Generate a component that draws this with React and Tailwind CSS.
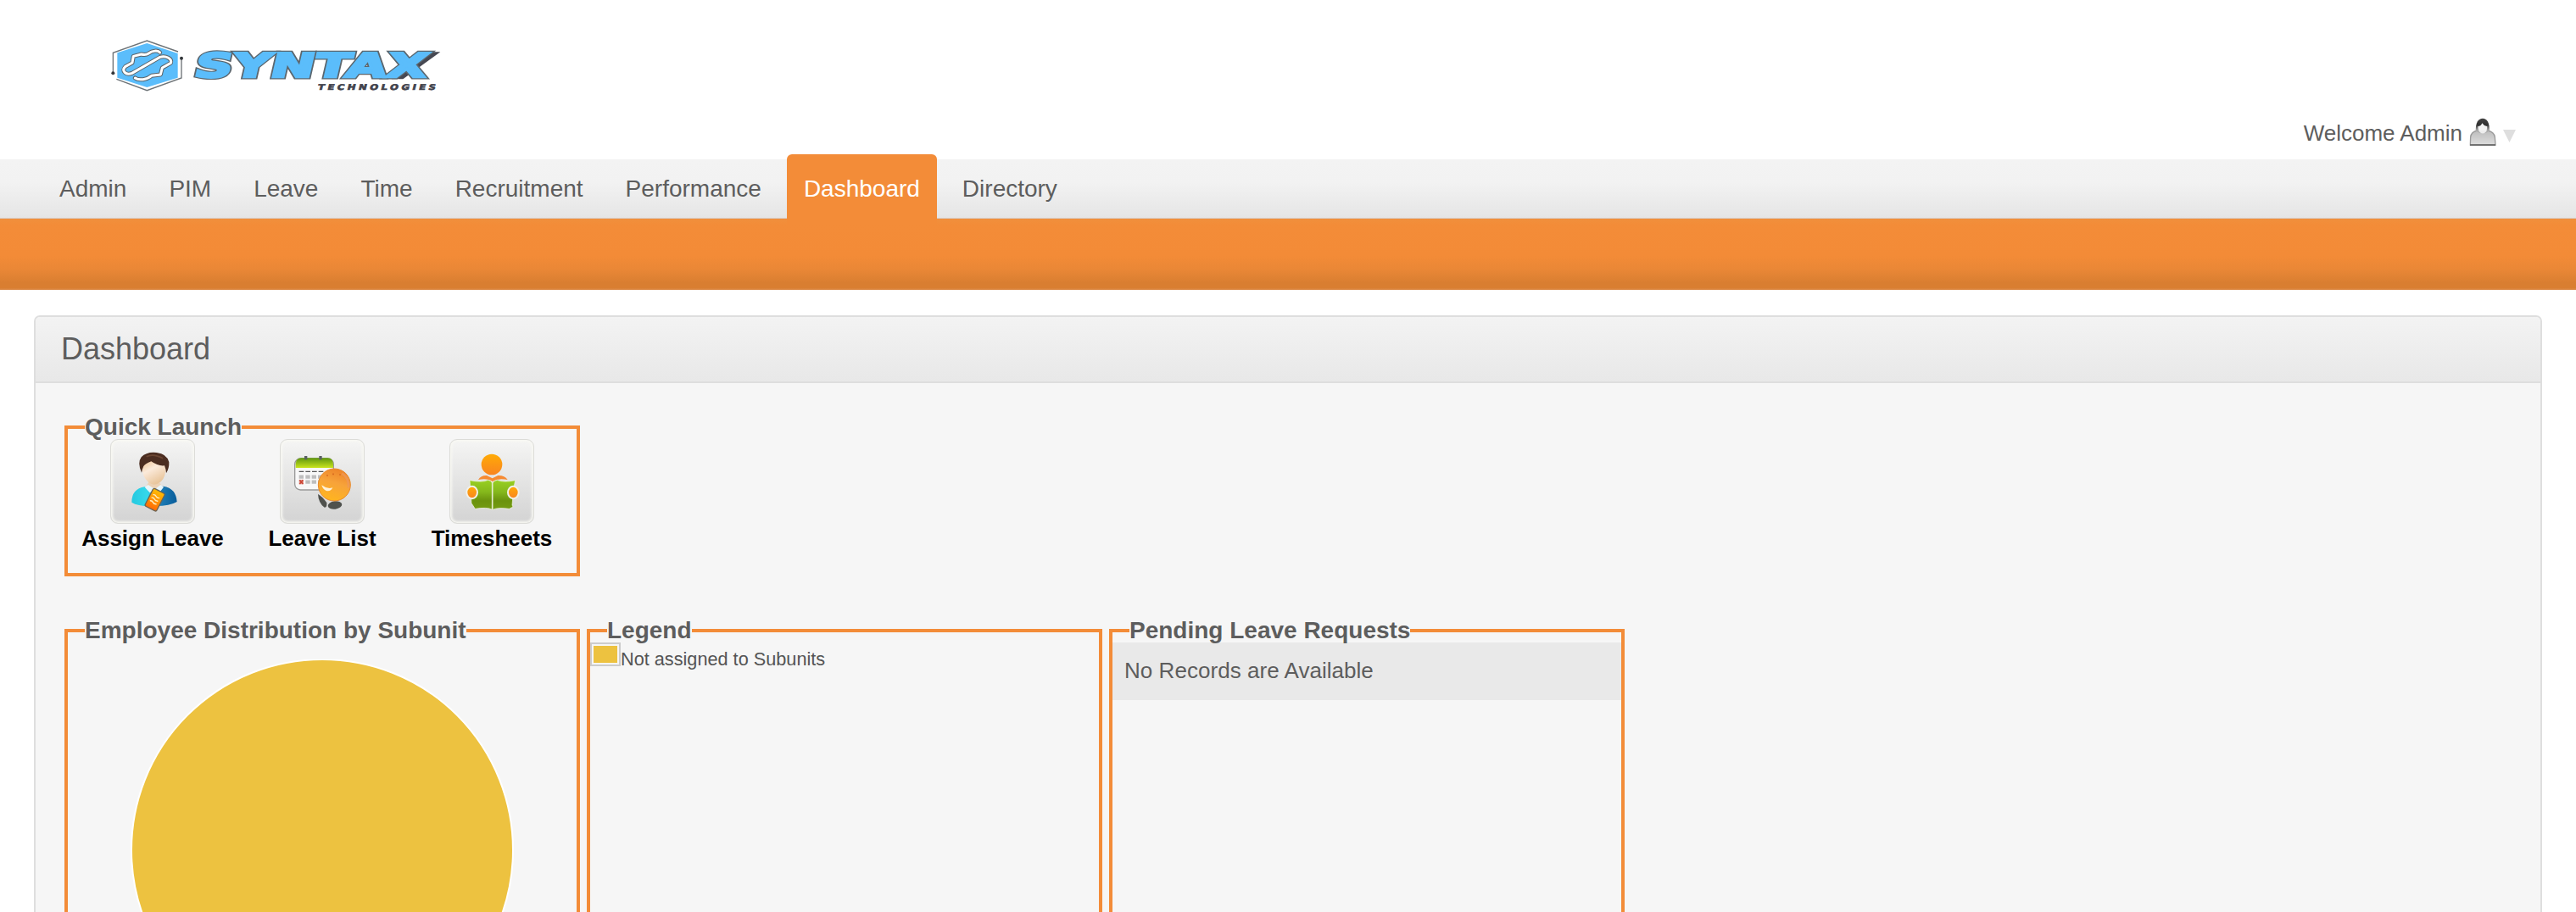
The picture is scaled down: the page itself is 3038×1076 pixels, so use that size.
import React from "react";

const menu = ["Admin", "PIM", "Leave", "Time", "Recruitment", "Performance", "Dashboard", "Directory"];

function Wordmark({ stroke, width }) {
  return (
    <text
      transform="translate(352 184) skewX(-13)"
      textLength="822"
      lengthAdjust="spacingAndGlyphs"
      fontFamily="DejaVu Sans, sans-serif"
      fontWeight="700"
      fontSize="118"
      fill="#5bbdfb"
      stroke={stroke}
      strokeWidth={width}
      strokeLinejoin="miter"
    >
      SYNTAX
    </text>
  );
}

function Logo() {
  return (
    <svg className="ml-[110px] mt-[30px] block h-[90px] w-[430px]" viewBox="0 0 1290 270">
      <path d="M85 97 L190 63 L299 99 L299 185 L190 219 L85 185 Z" fill="#5bbdfb" />
      <g fill="none" stroke="#6d7377" strokeWidth="4">
        <path d="M70 168 V97 L190 54 L300 93" />
        <path d="M312 116 V186 L190 230 L82 190" />
      </g>
      <circle cx="70" cy="169" r="6" fill="#33363a" />
      <circle cx="312" cy="116" r="6" fill="#33363a" />
      <g fill="none" strokeLinecap="round" strokeLinejoin="round">
        <g stroke="#596269" strokeWidth="15">
          <path d="M236 96 C228 86 208 90 196 99 Q186 106 170 102 L142 109 L138 132 L113 146 C99 160 114 178 137 169 L236 112 C258 106 280 118 274 133 L244 150 L238 174 L206 178 C190 192 162 196 148 186" />
        </g>
        <g stroke="#fff" strokeWidth="9">
          <path d="M236 96 C228 86 208 90 196 99 Q186 106 170 102 L142 109 L138 132 L113 146 C99 160 114 178 137 169 L236 112 C258 106 280 118 274 133 L244 150 L238 174 L206 178 C190 192 162 196 148 186" />
        </g>
      </g>
      <path d="M1055 190 L1188 94 L1228 94 L1096 190 Z" fill="#464852" />
      <g aria-hidden="true"><Wordmark stroke="#5b666e" width="15" /></g>
      <Wordmark stroke="#5bbdfb" width="8" />
      <text
        transform="translate(793 227) skewX(-14)"
        textLength="427"
        lengthAdjust="spacingAndGlyphs"
        fontFamily="DejaVu Sans, sans-serif"
        fontWeight="700"
        fontSize="27"
        letterSpacing="8"
        fill="#42434d"
        stroke="#42434d"
        strokeWidth="2"
      >
        TECHNOLOGIES
      </text>
    </svg>
  );
}

function UserIcon() {
  return (
    <svg className="ml-[8px] block h-[33px] w-[32px]" viewBox="0 0 96 99">
      <defs>
        <linearGradient id="body" x1="0" y1="0" x2="0" y2="1">
          <stop offset="0" stopColor="#bcbcbc" />
          <stop offset="1" stopColor="#dedede" />
        </linearGradient>
        <linearGradient id="hair" x1="0" y1="0" x2="0" y2="1">
          <stop offset="0" stopColor="#454545" />
          <stop offset="0.45" stopColor="#303030" />
          <stop offset="0.8" stopColor="#aaa" />
        </linearGradient>
      </defs>
      <path d="M4 96 L5 68 Q7 50 28 45 L66 45 Q88 50 91 68 L93 96 Z" fill="url(#body)" stroke="#9a9a9a" strokeWidth="4" />
      <path d="M3 96 H93" stroke="#666" strokeWidth="5" />
      <path d="M23 44 Q24 2 48 2 Q71 2 72 44 Q64 54 48 54 Q32 54 23 44 Z" fill="url(#hair)" />
      <path d="M31 31 Q42 29 46 19 Q52 29 64 31 Q65 52 48 54 Q31 52 31 31 Z" fill="#f3f3f3" />
      <path d="M33 45 Q48 66 63 45" fill="#ededed" />
    </svg>
  );
}

function AssignIcon() {
  return (
    <>
      <defs>
        <linearGradient id="shirt" x1="0" x2="1">
          <stop offset="0" stopColor="#25c9e0" />
          <stop offset="0.35" stopColor="#35d8ea" />
          <stop offset="0.6" stopColor="#2180b8" />
          <stop offset="1" stopColor="#085c9a" />
        </linearGradient>
        <linearGradient id="face" x1="0" y1="0" x2="0.5" y2="1">
          <stop offset="0" stopColor="#e8b377" />
          <stop offset="0.5" stopColor="#fbeada" />
          <stop offset="1" stopColor="#e9c69d" />
        </linearGradient>
        <linearGradient id="note" x1="0" y1="0" x2="0" y2="1">
          <stop offset="0" stopColor="#ffbd05" />
          <stop offset="1" stopColor="#ff6a05" />
        </linearGradient>
      </defs>
      <path d="M106 248 Q106 200 152 193 L218 191 Q263 198 266 246 Q240 262 184 261 Q128 263 106 248 Z" fill="url(#shirt)" />
      <path d="M158 190 L168 174 H202 L212 190 L190 210 Z" fill="#edd2b6" />
      <path d="M152 194 L164 186 L188 202 L208 186 L219 194 L205 212 L187 203 L170 214 Z" fill="#e8f5fa" />
      <path d="M141 118 Q145 90 184 88 Q224 90 228 120 Q226 160 210 174 Q188 194 166 178 Q142 158 141 118 Z" fill="url(#face)" />
      <path d="M141 143 Q125 108 140 88 Q159 68 194 72 Q231 76 238 106 Q239 128 228 145 Q227 130 222 118 Q200 121 175 103 Q152 113 148 120 Q143 130 141 143 Z" fill="#4b2d20" />
      <path d="M158 86 Q182 74 216 92" fill="none" stroke="#6b4632" strokeWidth="5" />
      <g transform="rotate(27 188 239)">
        <rect x="165" y="204" width="46" height="70" rx="6" fill="url(#note)" stroke="#6b6456" strokeWidth="4" />
        <path d="M174 226 q6 -5 12 0 t14 0 M174 238 q6 -5 12 0 t14 0 M174 250 q6 -5 12 0 t14 0" fill="none" stroke="#fff0c5" strokeWidth="4" />
      </g>
    </>
  );
}

function LeaveIcon() {
  return (
    <>
      <defs>
        <linearGradient id="calTop" x1="0" y1="0" x2="0" y2="1">
          <stop offset="0" stopColor="#5f960e" />
          <stop offset="1" stopColor="#cae51d" />
        </linearGradient>
        <linearGradient id="ball" x1="0.7" y1="0" x2="0.4" y2="1">
          <stop offset="0" stopColor="#ed8228" />
          <stop offset="0.45" stopColor="#f7a33a" />
          <stop offset="1" stopColor="#ffb51e" />
        </linearGradient>
      </defs>
      <rect x="83" y="93" width="137" height="111" rx="20" fill="#f8f8f8" stroke="#999" strokeWidth="4" />
      <path d="M86 126 V112 Q87 92 106 91 H199 Q219 92 219 112 V126 Z" fill="url(#calTop)" />
      <path d="M122 84 V97 M174 84 V97" stroke="#5a6062" strokeWidth="10" />
      <path d="M98 139 H188" stroke="#555" strokeWidth="4" strokeDasharray="17 6" />
      <path d="M121 158 H186 M98 158 H116 M121 176 H186" stroke="#bebebe" strokeWidth="13" strokeDasharray="16 6" />
      <rect x="98" y="168" width="16" height="16" fill="#e4a49b" />
      <path d="M100 169 L112 183 M112 169 L100 183" stroke="#cc4737" strokeWidth="5" />
      <path d="M165 219 Q178 225 196 249 Q198 267 188 266 Q167 252 165 219 Z" fill="#4f514d" />
      <ellipse cx="225" cy="258" rx="25" ry="14" transform="rotate(-7 225 258)" fill="#4f514d" />
      <ellipse cx="223" cy="186" rx="57" ry="57" fill="url(#ball)" stroke="#e98a2c" strokeWidth="3" />
      <path d="M250 145 Q276 162 273 196" fill="none" stroke="#ed985e" strokeWidth="8" opacity="0.7" />
      <path d="M178 187 Q197 202 217 196 Q210 211 194 207 Q181 201 178 187 Z" fill="#fff1d8" />
      <path d="M195 153 h6 M216 148 h6 M240 150 h6" stroke="#da6e22" strokeWidth="5" />
    </>
  );
}

function TimesheetIcon() {
  return (
    <>
      <defs>
        <linearGradient id="orange" x1="0" y1="0" x2="0" y2="1">
          <stop offset="0" stopColor="#ffab06" />
          <stop offset="1" stopColor="#f98420" />
        </linearGradient>
        <linearGradient id="book" x1="0" y1="0" x2="0" y2="1">
          <stop offset="0" stopColor="#98d022" />
          <stop offset="0.4" stopColor="#85b81c" />
          <stop offset="0.7" stopColor="#6b920d" />
          <stop offset="1" stopColor="#749c12" />
        </linearGradient>
      </defs>
      <circle cx="180" cy="114" r="37" fill="url(#orange)" />
      <path d="M132 168 Q142 152 162 153 L182 163 L202 153 Q225 152 236 168 Q203 161 182 174 Q164 161 132 168 Z" fill="#f68a32" />
      <path d="M102 170 Q146 179 167 169 Q178 171 182 180 Q188 171 199 169 Q222 179 263 170 L257 200 L252 258 L255 264 L242 271 Q201 265 183 274 Q163 264 121 271 L108 251 Z" fill="url(#book)" stroke="#f3f6e9" strokeWidth="2" />
      <path d="M182 175 V274" stroke="#e6edcf" strokeWidth="5" />
      <ellipse cx="110" cy="213" rx="19" ry="22" fill="url(#orange)" stroke="#f2f1e9" strokeWidth="6" />
      <ellipse cx="256" cy="213" rx="19" ry="22" fill="url(#orange)" stroke="#f2f1e9" strokeWidth="6" />
    </>
  );
}

function Tile({ label, children }) {
  return (
    <div className="flex w-[200px] flex-col items-center">
      <div className="h-[100px] w-[100px] rounded-[9px] border border-[#dcdcd8] bg-gradient-to-b from-[#f5f5f4] to-[#d3d3d3] shadow-[inset_0_0_3px_2px_#f8f8f3]">
        <svg className="-m-px block h-[100px] w-[100px]" viewBox="30 24 300 300">
          {children}
        </svg>
      </div>
      <span className="mt-[2px] text-[26px] font-bold leading-[30px] text-black">{label}</span>
    </div>
  );
}

function Panel({ title, className, children }) {
  return (
    <section className={"w-[608px] shrink-0 border-4 border-[#f38c38] " + className}>
      <h2 className="relative z-10 -mt-[18px] ml-[20px] h-[30px] w-fit text-[28px] font-bold leading-[32px] text-[#5d5d5d]">
        <span className="block h-[30px] bg-[linear-gradient(#f6f6f6,#f6f6f6)] bg-[length:100%_28px] bg-no-repeat">{title}</span>
      </h2>
      {children}
    </section>
  );
}

export default function App() {
  return (
    <div className="h-[1076px] w-[3038px] overflow-hidden bg-white font-['Liberation_Sans',Arial,sans-serif] text-[#5d5d5d]">
      <header className="flex h-[188px] items-start justify-between">
        <Logo />
        <div className="mt-[139px] flex pr-[71px]">
          <span className="pt-[2px] text-[26px] leading-[32px]">Welcome Admin</span>
          <UserIcon />
          <svg className="ml-[8px] mt-[14px] block h-[15px] w-[15px]" viewBox="0 0 15 15">
            <path d="M0 0 H15 L7.5 15 Z" fill="#dedede" />
          </svg>
        </div>
      </header>

      <nav className="h-[70px] border-b border-[#d9cbc2] bg-[linear-gradient(#f3f3f3_0%,#f2f2f2_40%,#e5e5e5_100%)] pl-[50px]">
        <ul className="flex gap-[10px] text-[28px] leading-[69px]">
          {menu.map((m) => (
            <li
              key={m}
              className={
                m === "Dashboard"
                  ? "relative -mt-[6px] h-[84px] rounded-t-[6px] bg-[#f38c38] px-[20px] pt-[6px] text-white"
                  : "h-[69px] px-[20px]"
              }
            >
              {m}
            </li>
          ))}
        </ul>
      </nav>
      <div className="h-[84px] bg-[linear-gradient(#f0903d_0%,#f38c38_8%,#f38b37_52%,#e98736_72%,#d97e31_90%,#d97e31_97%,#dd8b48_100%)]" />

      <main className="mx-[40px] mt-[30px] h-[760px] rounded-t-[7px] border-2 border-[#dedede] bg-[#f6f6f6]">
        <h1 className="h-[78px] rounded-t-[5px] border-b-2 border-[#dedede] bg-gradient-to-b from-[#f3f3f3] to-[#e8e8e8] pl-[30px] text-[36px] leading-[75px]">
          Dashboard
        </h1>
        <div className="pl-[34px] pt-[50px]">
          <Panel title="Quick Launch" className="h-[178px]">
            <div className="flex">
              <Tile label="Assign Leave"><AssignIcon /></Tile>
              <Tile label="Leave List"><LeaveIcon /></Tile>
              <Tile label="Timesheets"><TimesheetIcon /></Tile>
            </div>
          </Panel>
          <div className="mt-[62px] flex gap-[8px]">
            <Panel title="Employee Distribution by Subunit" className="h-[520px]">
              <svg className="mt-[20px] block h-[450px] w-[600px]" viewBox="0 0 600 450">
                <circle cx="300" cy="225" r="225" fill="#edc240" stroke="#fff" strokeWidth="2" />
              </svg>
            </Panel>
            <Panel title="Legend" className="h-[520px]">
              <div className="flex">
                <span className="h-[28px] w-[36px] border-2 border-[#ccc] p-[2px]">
                  <span className="block h-[20px] bg-[#edc240]" />
                </span>
                <span className="mt-[8px] text-[21.7px] leading-[24px] text-[#545454]">Not assigned to Subunits</span>
              </div>
            </Panel>
            <Panel title="Pending Leave Requests" className="h-[520px]">
              <div className="h-[68px] bg-[#e9e9e9] pl-[14px] text-[26px] leading-[66px] tracking-[0.04px]">No Records are Available</div>
            </Panel>
          </div>
        </div>
      </main>
    </div>
  );
}
